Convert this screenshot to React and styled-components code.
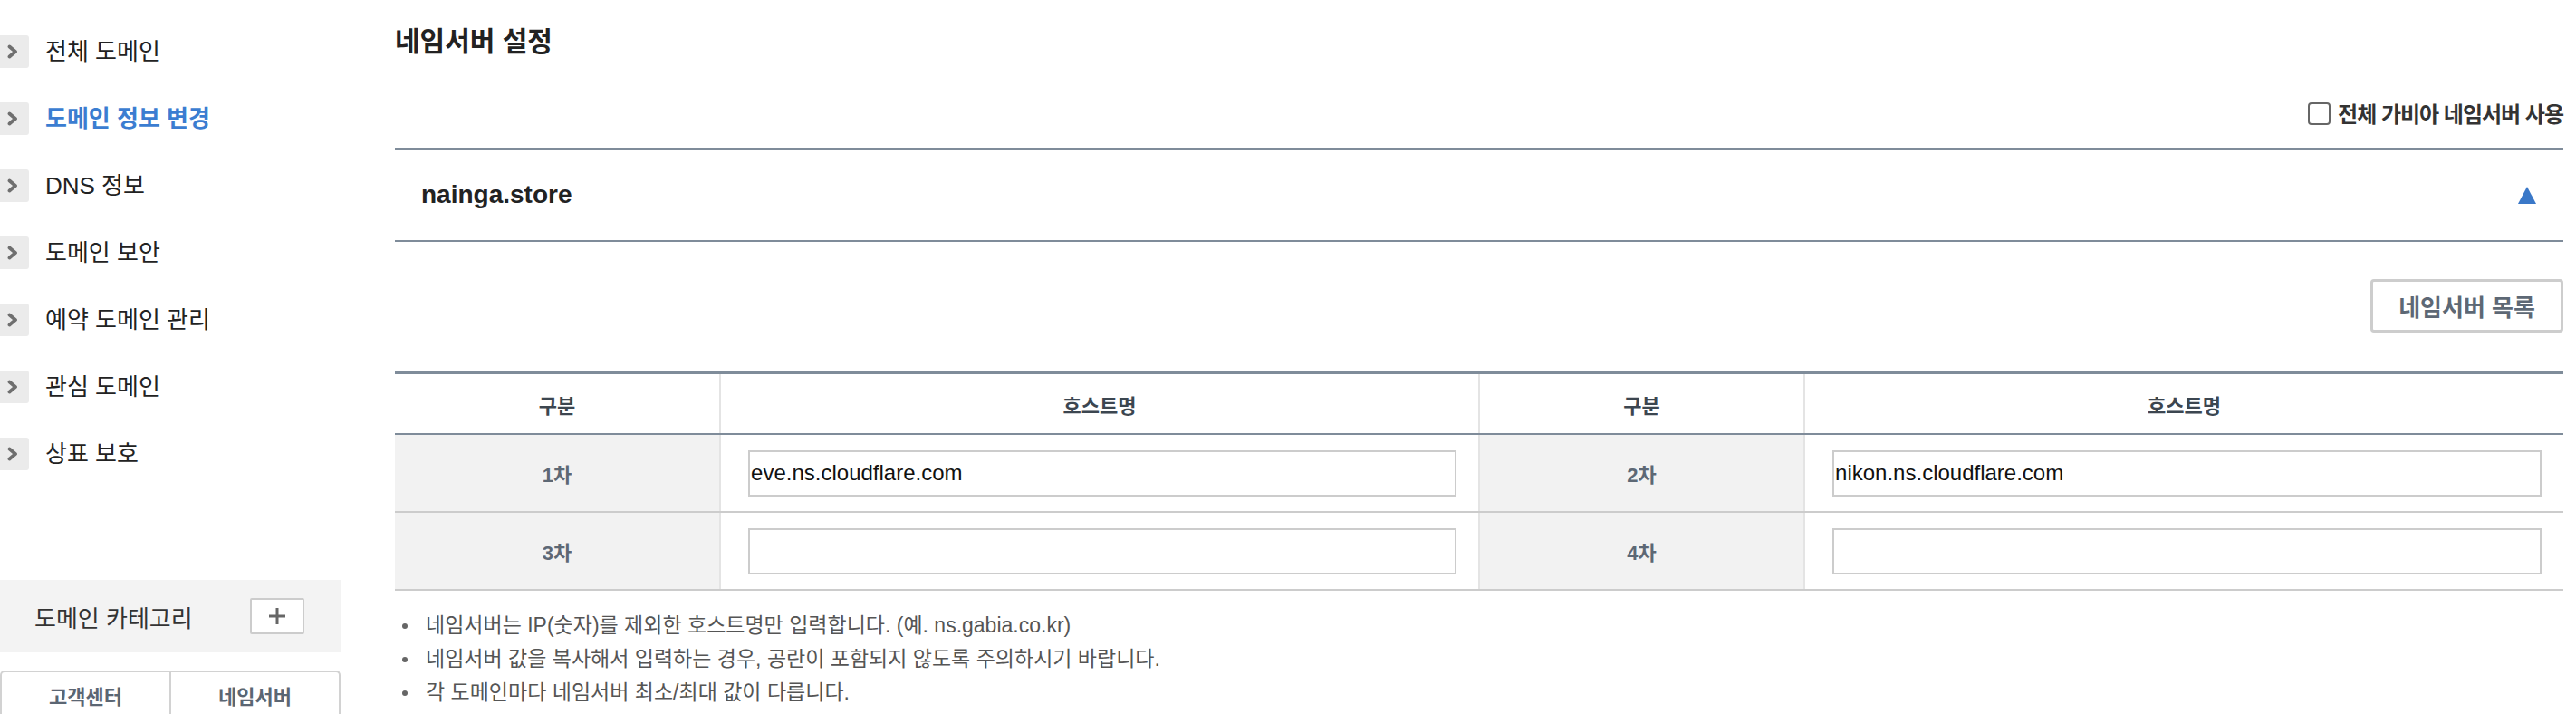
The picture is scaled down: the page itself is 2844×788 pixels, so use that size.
import React from 'react'
import styled, { createGlobalStyle } from 'styled-components'

const GlobalStyle = createGlobalStyle`
body{
    margin: 0;
    background: #fff;
    font-family: "Liberation Sans", "Noto Sans CJK KR", sans-serif;
    color: #222;
}
`;

const menus = ['전체 도메인', '도메인 정보 변경', 'DNS 정보', '도메인 보안', '예약 도메인 관리', '관심 도메인', '상표 보호'];

const servers = [
    [{ label: '1차', value: 'eve.ns.cloudflare.com' }, { label: '2차', value: 'nikon.ns.cloudflare.com' }],
    [{ label: '3차', value: '' }, { label: '4차', value: '' }],
];

const notes = [
    '네임서버는 IP(숫자)를 제외한 호스트명만 입력합니다. (예. ns.gabia.co.kr)',
    '네임서버 값을 복사해서 입력하는 경우, 공란이 포함되지 않도록 주의하시기 바랍니다.',
    '각 도메인마다 네임서버 최소/최대 값이 다릅니다.',
];

function App() {
    return (
        <>
            <GlobalStyle />
            <Page>
                <Sidebar>
                    <Menu>
                        {menus.map((m, i) => (
                            <MenuItem key={m} $active={i === 1}>
                                <Chevron>
                                    <svg width="12" height="16" viewBox="0 0 12 16">
                                        <polyline points="2.5,2.5 9,8 2.5,13.5" fill="none" stroke="#6f6f6f" strokeWidth="3.8" strokeLinejoin="round" strokeLinecap="round" />
                                    </svg>
                                </Chevron>
                                <span>{m}</span>
                            </MenuItem>
                        ))}
                    </Menu>
                    <Category>
                        <span>도메인 카테고리</span>
                        <PlusButton>
                            <svg width="20" height="20" viewBox="0 0 20 20">
                                <path d="M10 1v18M1 10h18" stroke="#666" strokeWidth="3" />
                            </svg>
                        </PlusButton>
                    </Category>
                    <Tabs>
                        <Tab>고객센터</Tab>
                        <Tab>네임서버</Tab>
                    </Tabs>
                </Sidebar>

                <Main>
                    <Title>네임서버 설정</Title>
                    <CheckRow>
                        <CheckBox type="checkbox" />
                        <span>전체 가비아 네임서버 사용</span>
                    </CheckRow>
                    <DomainBar>
                        <DomainName>nainga.store</DomainName>
                        <Triangle />
                    </DomainBar>
                    <ButtonRow>
                        <ListButton>네임서버 목록</ListButton>
                    </ButtonRow>
                    <Table>
                        <colgroup>
                            <col style={{ width: '15%' }} />
                            <col style={{ width: '35%' }} />
                            <col style={{ width: '15%' }} />
                            <col style={{ width: '35%' }} />
                        </colgroup>
                        <thead>
                            <tr>
                                <Th>구분</Th>
                                <Th>호스트명</Th>
                                <Th>구분</Th>
                                <Th>호스트명</Th>
                            </tr>
                        </thead>
                        <tbody>
                            {servers.map((row, r) => (
                                <tr key={r}>
                                    {row.map(cell => (
                                        <React.Fragment key={cell.label}>
                                            <LabelCell>{cell.label}</LabelCell>
                                            <InputCell>
                                                <HostInput type="text" defaultValue={cell.value} />
                                            </InputCell>
                                        </React.Fragment>
                                    ))}
                                </tr>
                            ))}
                        </tbody>
                    </Table>
                    <Notes>
                        {notes.map(n => <li key={n}>{n}</li>)}
                    </Notes>
                </Main>
            </Page>
        </>
    )
}

const Page = styled.div`
display: flex;
align-items: flex-start;
height: 788px;
overflow: hidden;
`;

const Sidebar = styled.aside`
width: 376px;
flex-shrink: 0;
padding-top: 39px;
`;

const Menu = styled.ul`
list-style: none;
margin: 0;
padding: 0;
display: flex;
flex-direction: column;
gap: 38px;
`;

const MenuItem = styled.li`
display: flex;
align-items: center;
height: 36px;
font-size: 26px;
color: ${p => p.$active ? '#3b7dd1' : '#222'};
font-weight: ${p => p.$active ? 700 : 400};

span{
    margin-left: 18px;
    line-height: 36px;
}
`;

const Chevron = styled.div`
width: 32px;
height: 36px;
background: #ebebeb;
border-radius: 0 3px 3px 0;
display: flex;
align-items: center;
justify-content: flex-start;
padding-left: 8px;
box-sizing: border-box;
`;

const Category = styled.div`
margin-top: 121px;
height: 80px;
background: #f3f3f3;
display: flex;
align-items: center;
justify-content: space-between;
padding: 0 40px 0 38px;
font-size: 26px;
color: #333;
`;

const PlusButton = styled.button`
width: 60px;
height: 40px;
background: #fff;
border: 2px solid #ccc;
border-radius: 2px;
display: flex;
align-items: center;
justify-content: center;
padding: 0;
`;

const Tabs = styled.div`
margin-top: 20px;
display: flex;
border: 2px solid #d2d2d2;
border-bottom: none;
border-radius: 5px 5px 0 0;
height: 60px;
`;

const Tab = styled.div`
flex: 1;
text-align: center;
font-size: 22px;
font-weight: 700;
color: #5b6673;
padding-top: 13px;
line-height: 30px;

& + &{
    border-left: 2px solid #d2d2d2;
}
`;

const Main = styled.main`
flex: 1;
margin: 0 14px 0 60px;
`;

const Title = styled.h2`
margin: 0;
padding-top: 26px;
font-size: 30px;
line-height: 40px;
font-weight: 700;
color: #222;
`;

const CheckRow = styled.label`
margin-top: 43px;
display: flex;
justify-content: flex-end;
align-items: center;
height: 30px;
font-size: 24px;
font-weight: 700;
letter-spacing: -1px;
color: #333;
`;

const CheckBox = styled.input`
appearance: none;
width: 25px;
height: 25px;
border: 2px solid #666;
border-radius: 4px;
margin: 2px 8px 0 0;
background: #fff;
`;

const DomainBar = styled.div`
margin-top: 24px;
height: 100px;
border-top: 2px solid #7f8c9a;
border-bottom: 2px solid #7f8c9a;
display: flex;
align-items: center;
justify-content: space-between;
padding: 0 30px 0 29px;
`;

const DomainName = styled.div`
font-family: "Liberation Sans", sans-serif;
font-size: 28px;
font-weight: 700;
color: #222;
`;

const Triangle = styled.span`
width: 0;
height: 0;
border-left: 10px solid transparent;
border-right: 10px solid transparent;
border-bottom: 19px solid #3a78c8;
`;

const ButtonRow = styled.div`
margin-top: 41px;
display: flex;
justify-content: flex-end;
`;

const ListButton = styled.button`
width: 213px;
height: 59px;
background: #fff;
border: 3px solid #cdcdcd;
border-radius: 4px;
font-family: "Liberation Sans", "Noto Sans CJK KR", sans-serif;
font-size: 26px;
font-weight: 700;
color: #5d6875;
`;

const Table = styled.table`
margin-top: 42px;
width: 100%;
table-layout: fixed;
border-collapse: collapse;
border-top: 4px solid #7f8c9a;
`;

const Th = styled.th`
height: 65px;
padding: 0;
font-size: 22px;
font-weight: 700;
color: #3c4650;
border-bottom: 2px solid #7f8c9a;

& + &{
    border-left: 2px solid #e4e4e4;
}
`;

const LabelCell = styled.td`
height: 84px;
padding: 0;
background: #f2f2f2;
text-align: center;
font-size: 22px;
font-weight: 700;
color: #5d6875;
border-bottom: 2px solid #cccccc;
border-left: 2px solid #e4e4e4;

&:first-child{
    border-left: none;
}
`;

const InputCell = styled.td`
height: 84px;
padding: 0 24px 0 30px;
border-bottom: 2px solid #cccccc;
border-left: 2px solid #e4e4e4;
`;

const HostInput = styled.input`
display: block;
width: 100%;
height: 51px;
box-sizing: border-box;
border: 2px solid #cccccc;
padding: 0 1px;
font-family: "Liberation Sans", sans-serif;
font-size: 24px;
color: #111;
outline: none;
`;

const Notes = styled.ul`
list-style: none;
margin: 20px 0 0;
padding: 0 0 0 8px;
font-size: 23px;
line-height: 37px;
color: #555;

li{
    display: flex;
    align-items: center;
    gap: 20px;
}

li::before{
    content: "";
    width: 6px;
    height: 6px;
    border-radius: 50%;
    background: #666;
    flex-shrink: 0;
}
`;

export default App
